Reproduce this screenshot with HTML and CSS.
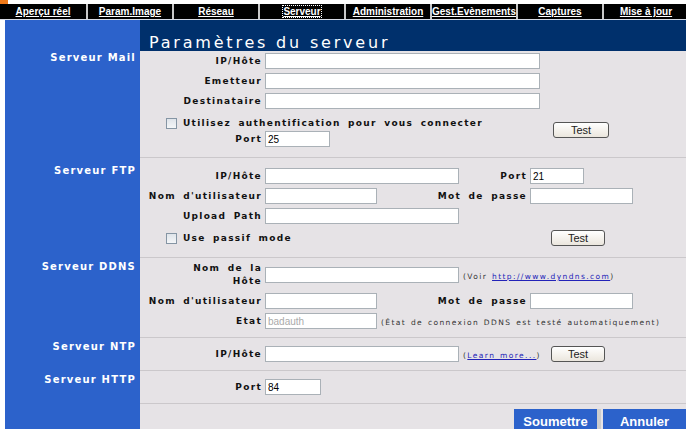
FILE: index.html
```html
<!DOCTYPE html>
<html lang="fr">
<head>
  <meta charset="UTF-8" />
  <title>Paramètres du serveur</title>
  <link rel="stylesheet" href="styles.css">
</head>
<body>
  <div class="topbar"><span class="corner"></span></div>

  <nav class="tabs">
    <a href="#">Aperçu réel</a>
    <a href="#">Param.Image</a>
    <a href="#">Réseau</a>
    <a href="#" class="current"><span>Serveur</span></a>
    <a href="#">Administration</a>
    <a href="#">Gest.Evènements</a>
    <a href="#">Captures</a>
    <a href="#">Mise à jour</a>
  </nav>

  <div class="page">
    <div class="side"></div>
    <div class="head"><h1 class="title">Paramètres du serveur</h1></div>

    <!-- Mail -->
    <div class="side side-mail">Serveur Mail</div>
    <div class="main sect sect-mail">
      <label class="lbl">IP/Hôte</label>
      <input type="text" class="w275 span">
      <label class="lbl">Emetteur</label>
      <input type="text" class="w275 span">
      <label class="lbl">Destinataire</label>
      <input type="text" class="w275 span">
      <div class="check check-mail"><span class="box"></span>Utilisez authentification pour vous connecter</div>
      <button class="test test-mail">Test</button>
      <label class="lbl">Port</label>
      <input type="text" class="w65" value="25">
    </div>

    <!-- FTP -->
    <div class="side side-ftp">Serveur FTP</div>
    <div class="main sect sect-ftp">
      <label class="lbl">IP/Hôte</label>
      <input type="text" class="w194">
      <label class="lbl lbl2">Port</label>
      <input type="text" class="w54" value="21">
      <label class="lbl">Nom d'utilisateur</label>
      <input type="text" class="w112">
      <label class="lbl lbl2">Mot de passe</label>
      <input type="password" class="w103">
      <label class="lbl">Upload Path</label>
      <input type="text" class="w194">
      <div class="check check-ftp"><span class="box"></span>Use passif mode</div>
      <button class="test">Test</button>
    </div>

    <!-- DDNS -->
    <div class="side">Serveur DDNS</div>
    <div class="main sect sect-ddns">
      <label class="lbl lbl-two">Nom de la<br>Hôte</label>
      <div class="field span">
        <input type="text" class="w194">
        <span class="note">(Voir <a href="#">http://www.dyndns.com</a>)</span>
      </div>
      <label class="lbl">Nom d'utilisateur</label>
      <input type="text" class="w112">
      <label class="lbl lbl2">Mot de passe</label>
      <input type="password" class="w103">
      <label class="lbl">Etat</label>
      <div class="field span">
        <input type="text" class="w112 etat" value="badauth" disabled>
        <span class="note">(État de connexion DDNS est testé automatiquement)</span>
      </div>
    </div>

    <!-- NTP -->
    <div class="side">Serveur NTP</div>
    <div class="main sect">
      <label class="lbl">IP/Hôte</label>
      <div class="field field-ntp">
        <input type="text" class="w194">
        <span class="note">(<a href="#">Learn more...</a>)</span>
      </div>
      <button class="test">Test</button>
    </div>

    <!-- HTTP -->
    <div class="side">Serveur HTTP</div>
    <div class="main sect">
      <label class="lbl">Port</label>
      <input type="text" class="w56" value="84">
    </div>

    <div class="side"></div>
    <div class="main actions">
      <button class="btn btn-submit">Soumettre</button>
      <button class="btn">Annuler</button>
    </div>
  </div>
</body>
</html>
```

FILE: styles.css
```css
body {
  margin: 0;
  background: #fff;
  font-family: "DejaVu Sans", Verdana, sans-serif;
  overflow: hidden;
}

.topbar {
  height: 4px;
}

.topbar .corner {
  display: block;
  width: 8px;
  height: 4px;
  background: #f07a1a;
}

.tabs {
  display: flex;
  width: 686px;
  height: 15px;
  background: #000;
  border-bottom: 1px solid #d6dbe6;
  overflow: hidden;
}

.tabs a {
  flex: none;
  width: 84px;
  border-left: 2px solid #c8c8c8;
  color: #fff;
  font: bold 10px/15px "Liberation Sans", Arial, sans-serif;
  text-align: center;
  text-decoration: underline;
}

.tabs a:first-child {
  width: 86px;
  border-left: 0;
}

.tabs a.current span {
  outline: 1px dotted #fff;
}

.page {
  display: grid;
  grid-template-columns: 135px 546px;
  margin-left: 5px;
}

.side {
  background: #2c62cb;
  color: #fff;
  font-weight: bold;
  font-size: 10px;
  line-height: 12px;
  letter-spacing: 1.2px;
  text-align: right;
  padding: 3px 4px 0 0;
}

.side-mail {
  padding-top: 1px;
}

.side-ftp {
  padding-top: 7px;
}

.head {
  background: #00306c;
  height: 31px;
}

.title {
  margin: 0;
  padding: 14px 0 0 9px;
  color: #fff;
  font-size: 16px;
  line-height: 18px;
  font-weight: normal;
  letter-spacing: 2.8px;
}

.main {
  background: #e6e3e6;
}

.sect {
  display: grid;
  grid-template-columns: 122px 155px 104px 1fr;
  column-gap: 3px;
  row-gap: 4px;
  align-items: center;
  padding: 8px 0;
  border-bottom: 1px solid #cbc8cb;
}

.sect-mail {
  padding: 2px 0 10px;
}

.sect-ftp {
  padding: 10px 0 9px;
}

.sect-ddns {
  padding: 4px 0 8px;
  row-gap: 4.5px;
}

.lbl {
  font-size: 9px;
  font-weight: bold;
  letter-spacing: 1.3px;
  word-spacing: 3px;
  text-align: right;
  white-space: nowrap;
  color: #111;
}

.lbl2 {
  justify-self: end;
}

.lbl-two {
  line-height: 13px;
}

.span {
  grid-column: 2 / -1;
  justify-self: start;
}

input {
  flex-shrink: 0;
  box-sizing: border-box;
  height: 16px;
  margin: 0;
  padding: 0 2px;
  border: 1px solid #aab1b7;
  background: #fff;
  font: 10px "Liberation Sans", Arial, sans-serif;
  color: #000;
}

input.etat {
  background: #fff;
  color: #aaa;
}

.w275 { width: 275px; }
.w194 { width: 194px; }
.w112 { width: 112px; }
.w103 { width: 103px; }
.w65 { width: 65px; }
.w56 { width: 56px; }
.w54 { width: 54px; }

.check {
  grid-column: 1 / 4;
  display: flex;
  align-items: center;
  gap: 6px;
  padding-left: 26px;
  font-size: 9px;
  font-weight: bold;
  letter-spacing: 1.3px;
  word-spacing: 3px;
  color: #111;
  white-space: nowrap;
}

.check-mail {
  height: 14px;
  margin: 3px 0 -3px;
}

.check-ftp {
  height: 20px;
}

.box {
  flex-shrink: 0;
  width: 11px;
  height: 11px;
  box-sizing: border-box;
  border: 1px solid #8595a4;
  background: linear-gradient(#dfe4ea, #f4f6f8);
}

.test {
  grid-column: 4;
  justify-self: start;
  width: 54px;
  height: 16px;
  margin-left: 21px;
  padding: 0;
  border: 1px solid #555;
  border-radius: 3px;
  background: linear-gradient(#fff, #ebe6dd);
  font: 11px "Liberation Sans", Arial, sans-serif;
  color: #222;
}

.test-mail {
  grid-row: 4 / span 2;
  width: 56px;
  margin-left: 23px;
}

.field {
  display: flex;
  align-items: flex-end;
  gap: 4px;
}

.field-ntp {
  grid-column: 2 / 4;
}

.note {
  font-size: 7.5px;
  letter-spacing: 1.4px;
  word-spacing: 1px;
  color: #333;
  white-space: nowrap;
  line-height: 12px;
}

.note a {
  color: #2323b8;
}

.actions {
  display: flex;
  justify-content: flex-end;
  gap: 6px;
  padding-top: 5px;
  height: 30px;
}

.btn {
  width: 83px;
  height: 24px;
  border: 0;
  padding: 0;
  background: #2c62cb;
  color: #fff;
  font: bold 13px "Liberation Sans", Arial, sans-serif;
}

.btn-submit {
  box-shadow: 4px 0 0 #cdcdcd;
}
```
